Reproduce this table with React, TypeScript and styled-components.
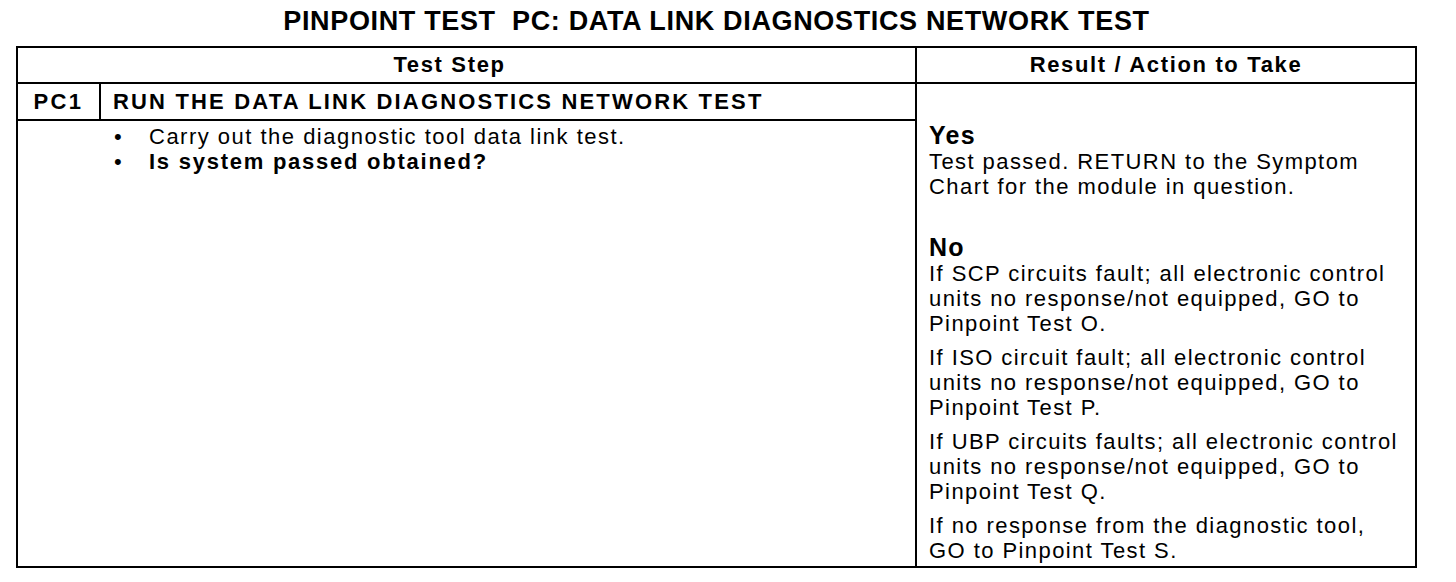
import styled, { createGlobalStyle } from 'styled-components';

const GlobalStyle = createGlobalStyle`
	html, body {
		margin: 0;
		padding: 0;
		background: #fff;
	}

	body {
		font-family: "Liberation Sans", Arial, sans-serif;
		color: #000;
	}
`;

type Bullet = { text: string; bold?: boolean };

const steps: Bullet[] = [
	{ text: 'Carry out the diagnostic tool data link test.' },
	{ text: 'Is system passed obtained?', bold: true },
];

const noActions = [
	'If SCP circuits fault; all electronic control units no response/not equipped, GO to Pinpoint Test O.',
	'If ISO circuit fault; all electronic control units no response/not equipped, GO to Pinpoint Test P.',
	'If UBP circuits faults; all electronic control units no response/not equipped, GO to Pinpoint Test Q.',
	'If no response from the diagnostic tool, GO to Pinpoint Test S.',
];

const App = () => {
	return (
		<>
			<GlobalStyle />
			<Page>
				<Title>PINPOINT TEST&nbsp; PC: DATA LINK DIAGNOSTICS NETWORK TEST</Title>

				<Table>
					<HeaderCell $span={2} $shift={34}>Test Step</HeaderCell>
					<HeaderCell>Result / Action to Take</HeaderCell>

					<StepId>PC1</StepId>
					<StepTitle>RUN THE DATA LINK DIAGNOSTICS NETWORK TEST</StepTitle>

					<ResultCell>
						<Outcome>Yes</Outcome>
						<ActionText>
							Test passed. RETURN to the Symptom Chart for the module in question.
						</ActionText>

						<Outcome $gap={35}>No</Outcome>
						{noActions.map((line, i) => (
							<ActionText key={i} $spaced={i > 0}>{line}</ActionText>
						))}
					</ResultCell>

					<StepBody>
						{steps.map((step, i) => (
							<BulletRow key={i} $bold={step.bold}>
								<Dot>•</Dot>
								<span>{step.text}</span>
							</BulletRow>
						))}
					</StepBody>
				</Table>
			</Page>
		</>
	);
};

const Page = styled.div`
	width: 1401px;
	padding-left: 16px;
`;

const Title = styled.h1`
	margin: 0;
	height: 46px;
	line-height: 42px;

	text-align: center;
	font-size: 27px;
	font-weight: 700;
	letter-spacing: 0.65px;
	white-space: nowrap;
`;

const Table = styled.div`
	display: grid;
	grid-template-columns: 81px 814px 498px;
	grid-template-rows: 34px 35px 445px;
	gap: 2px;

	background: #000;
	border: 2px solid #000;
`;

const Cell = styled.div`
	background: #fff;
	font-size: 22px;
	white-space: nowrap;
`;

const HeaderCell = styled(Cell)<{ $span?: number; $shift?: number }>`
	grid-column: span ${p => p.$span ?? 1};

	display: flex;
	align-items: center;
	justify-content: center;

	padding-right: ${p => p.$shift ?? 0}px;

	font-weight: 700;
	letter-spacing: 1.65px;
`;

const StepId = styled(Cell)`
	display: flex;
	align-items: center;
	justify-content: center;

	font-weight: 700;
	letter-spacing: 2.4px;
`;

const StepTitle = styled(Cell)`
	display: flex;
	align-items: center;

	padding-left: 12px;

	font-weight: 700;
	letter-spacing: 2.17px;
`;

const StepBody = styled(Cell)`
	grid-column: 1 / 3;
	grid-row: 3;

	padding: 3px 0 0 96px;
`;

const BulletRow = styled.div<{ $bold?: boolean }>`
	display: flex;

	line-height: 25px;
	font-weight: ${p => (p.$bold ? 700 : 400)};
	letter-spacing: ${p => (p.$bold ? 1.75 : 1.49)}px;
`;

const Dot = styled.span`
	width: 35px;
	flex-shrink: 0;
	font-weight: 400;
	letter-spacing: 0;
`;

const ResultCell = styled(Cell)`
	grid-column: 3;
	grid-row: 2 / 4;

	padding: 38px 12px 0 12px;
	white-space: normal;
`;

const Outcome = styled.div<{ $gap?: number }>`
	margin-top: ${p => p.$gap ?? 0}px;

	font-size: 25px;
	font-weight: 700;
	line-height: 27px;
	letter-spacing: 1.3px;
`;

const ActionText = styled.p<{ $spaced?: boolean }>`
	margin: ${p => (p.$spaced ? 9 : 0)}px 0 0;

	line-height: 25px;
	letter-spacing: 1.43px;
`;

export default App;
